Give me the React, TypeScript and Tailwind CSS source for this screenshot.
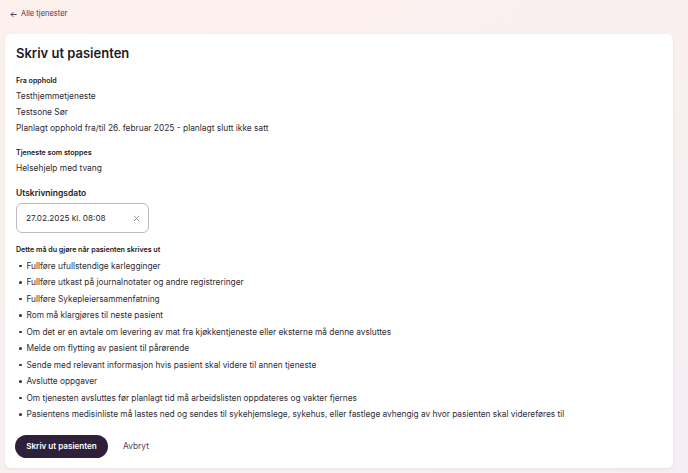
import React from 'react';

const todo = [
  'Fullføre ufullstendige karlegginger',
  'Fullføre utkast på journalnotater og andre registreringer',
  'Fullføre Sykepleiersammenfatning',
  'Rom må klargjøres til neste pasient',
  'Om det er en avtale om levering av mat fra kjøkkentjeneste eller eksterne må denne avsluttes',
  'Melde om flytting av pasient til pårørende',
  'Sende med relevant informasjon hvis pasient skal videre til annen tjeneste',
  'Avslutte oppgaver',
  'Om tjenesten avsluttes før planlagt tid må arbeidslisten oppdateres og vakter fjernes',
  'Pasientens medisinliste må lastes ned og sendes til sykehjemslege, sykehus, eller fastlege avhengig av hvor pasienten skal videreføres til',
];

const Label = ({ children }: { children: React.ReactNode }) => (
  <div className="text-[7.1px] leading-[14px] font-semibold text-[#18161b]">{children}</div>
);

const Line = ({ children }: { children: React.ReactNode }) => (
  <div className="text-[8.4px] leading-[16px] text-[#2f2c33]">{children}</div>
);

export default function App() {
  return (
    <div
      className="w-[688px] h-[473px] overflow-hidden bg-gradient-to-br from-[#fdf1ed] to-[#f6eef3]"
      style={{ fontFamily: 'Inter, "Noto Sans", sans-serif' }}
    >
      {/* Back link */}
      <div className="h-[34px] pl-[10px] pt-[8px]">
        <div className="flex items-center gap-[4px] h-[12px] text-[7.5px] text-[#4a3552]">
          <svg width="7" height="7" viewBox="0 0 10 10" fill="none" stroke="currentColor" strokeWidth="1.3" strokeLinecap="round" strokeLinejoin="round">
            <path d="M9 5H1.5M4.5 2L1.5 5l3 3" />
          </svg>
          <span>Alle tjenester</span>
        </div>
      </div>

      {/* Card */}
      <div className="ml-[5px] w-[668px] bg-white rounded-[6px] shadow-[0_1px_3px_rgba(80,40,60,0.08)] pt-[9px] pb-[10px] px-[11px]">
        <h1 className="text-[13px] leading-[20px] font-semibold text-[#1c1a1f]">Skriv ut pasienten</h1>

        <div className="mt-[11px]">
          <Label>Fra opphold</Label>
          <Line>Testhjemmetjeneste</Line>
          <Line>Testsone Sør</Line>
          <Line>Planlagt opphold fra/til 26. februar 2025 - planlagt slutt ikke satt</Line>
        </div>

        <div className="mt-[10px]">
          <Label>Tjeneste som stoppes</Label>
          <Line>Helsehjelp med tvang</Line>
        </div>

        <div className="mt-[9px] text-[8.5px] leading-[16px] font-semibold text-[#1c1a1f]">Utskrivningsdato</div>
        <div className="mt-[2px] w-[133px] h-[30px] border border-[#bfbac3] rounded-[6px] flex items-center justify-between pl-[9px] pr-[8px]">
          <span className="text-[8.2px] text-[#2a2730]">27.02.2025 kl. 08:08</span>
          <svg width="7" height="7" viewBox="0 0 10 10" stroke="#8a8590" strokeWidth="1.2" strokeLinecap="round">
            <path d="M1.5 1.5l7 7M8.5 1.5l-7 7" />
          </svg>
        </div>

        <div className="mt-[10px]">
          <Label>Dette må du gjøre når pasienten skrives ut</Label>
        </div>
        <ul className="mt-[0.5px]">
          {todo.map((t) => (
            <li key={t} className="flex items-center h-[16.5px] text-[8.3px] text-[#2f2c33]">
              <span className="ml-[3px] mr-[5px] w-[2.5px] h-[2.5px] rounded-full bg-[#2f2c33] shrink-0" />
              <span className="whitespace-nowrap">{t}</span>
            </li>
          ))}
        </ul>

        <div className="mt-[12.5px] flex items-center gap-[15px]">
          <button className="h-[23px] w-[93px] -ml-[1px] rounded-full bg-[#2e1f3a] text-white text-[8.1px] font-semibold">
            Skriv ut pasienten
          </button>
          <button className="text-[8.4px] text-[#4d4355]">Avbryt</button>
        </div>
      </div>
    </div>
  );
}
